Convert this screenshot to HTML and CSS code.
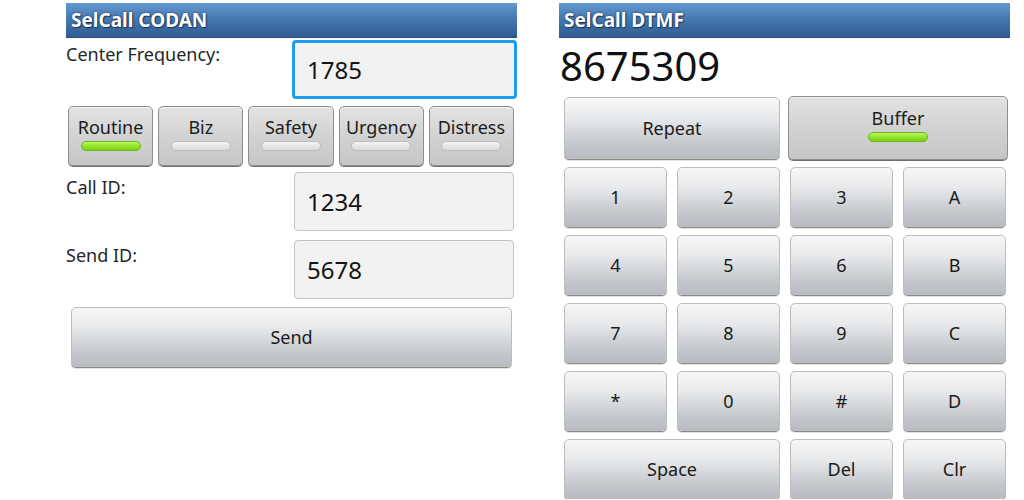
FILE: index.html
```html
<!DOCTYPE html>
<html>
<head>
<meta charset="utf-8">
<link rel="stylesheet" href="styles.css">
</head>
<body>
<div class="screen">
  <section class="panel">
    <div class="title">SelCall CODAN</div>
    <div class="field-row first">
      <div class="label">Center Frequency:</div>
      <div class="input focused">1785</div>
    </div>
    <div class="toggles">
      <div class="toggle"><span>Routine</span><i class="ind on"></i></div>
      <div class="toggle"><span>Biz</span><i class="ind"></i></div>
      <div class="toggle"><span>Safety</span><i class="ind"></i></div>
      <div class="toggle"><span>Urgency</span><i class="ind"></i></div>
      <div class="toggle"><span>Distress</span><i class="ind"></i></div>
    </div>
    <div class="field-row second">
      <div class="label">Call ID:</div>
      <div class="input">1234</div>
    </div>
    <div class="field-row third">
      <div class="label">Send ID:</div>
      <div class="input">5678</div>
    </div>
    <div class="btn send">Send</div>
  </section>
  <section class="panel">
    <div class="title">SelCall DTMF</div>
    <div class="number">8675309</div>
    <div class="keypad">
      <div class="btn span2">Repeat</div>
      <div class="toggle buffer span2"><span>Buffer</span><i class="ind on"></i></div>
      <div class="btn">1</div><div class="btn">2</div><div class="btn">3</div><div class="btn">A</div>
      <div class="btn">4</div><div class="btn">5</div><div class="btn">6</div><div class="btn">B</div>
      <div class="btn">7</div><div class="btn">8</div><div class="btn">9</div><div class="btn">C</div>
      <div class="btn">*</div><div class="btn">0</div><div class="btn">#</div><div class="btn">D</div>
      <div class="btn span2">Space</div><div class="btn">Del</div><div class="btn">Clr</div>
    </div>
  </section>
</div>
</body>
</html>
```

FILE: styles.css
```css
* { box-sizing: border-box; }
body {
  margin: 0;
  background: #ffffff;
  font-family: "Noto Sans", "Open Sans", "DejaVu Sans", sans-serif;
  color: #1c1c1c;
}
.screen {
  display: flex;
  gap: 42px;
  padding: 3px 0 0 66px;
}
.panel {
  width: 451px;
  display: flex;
  flex-direction: column;
}
.title {
  height: 35px;
  line-height: 34px;
  padding-left: 5px;
  color: #ffffff;
  font-weight: bold;
  font-size: 19px;
  background: linear-gradient(#6499cf, #4679b2 45%, #2f5d92);
  border-bottom: 1px solid #284f7d;
  text-shadow: 0 0 2px #17314f, 1px 1px 1px #1d3a5c;
}
.field-row {
  display: flex;
  justify-content: space-between;
  align-items: flex-start;
}
.label {
  font-size: 18px;
  line-height: 24px;
  color: #262626;
}
.first { margin-top: 2px; }
.first .label { padding-top: 2px; }
.second { margin-top: 6px; }
.third { margin-top: 9px; }
.second .label, .third .label { padding-top: 3px; }
.input {
  width: 220px;
  height: 59px;
  margin-right: 3px;
  background: #f2f2f2;
  border: 1px solid #c2c2c2;
  border-radius: 4px;
  padding-left: 12px;
  font-size: 24px;
  line-height: 57px;
  color: #141414;
}
.input.focused {
  width: 225px;
  margin-right: 0;
  border: 3px solid #1e9cf2;
  line-height: 53px;
}
.toggles {
  margin-top: 7px;
  padding: 0 3px 0 2px;
  display: grid;
  grid-template-columns: repeat(5, 1fr);
  gap: 5px;
  height: 60px;
}
.toggle {
  display: flex;
  flex-direction: column;
  align-items: center;
  justify-content: center;
  gap: 3px;
  padding-bottom: 6px;
  background: linear-gradient(#e3e3e3, #d2d2d2 50%, #c6c6c6);
  border: 1px solid #8e8e8e;
  border-radius: 5px;
  box-shadow: inset 0 1px 0 #f2f2f2, 0 1px 0 #6f6f6f;
  font-size: 18px;
  line-height: 22px;
  color: #1c1c1c;
}
.ind {
  display: block;
  width: 60px;
  height: 10px;
  border-radius: 5px;
  background: linear-gradient(#f4f4f4, #dadada);
  border: 1px solid #bdbdbd;
}
.ind.on {
  background: linear-gradient(#bdf75c, #8ee024 60%, #7cd018);
  border-color: #6bb81a;
}
.btn {
  display: flex;
  align-items: center;
  justify-content: center;
  background: linear-gradient(#f6f7f8, #e6e8ea 35%, #c6c9ce 75%, #b8bcc2);
  border: 1px solid #bdbdbd;
  border-radius: 5px;
  box-shadow: 0 1px 0 #8a8a8a, 0 2px 0 #e2e2e2;
  font-size: 18px;
  color: #1a1a1a;
}
.send {
  margin: 8px 5px 0 5px;
  height: 60px;
}
.number {
  height: 58px;
  padding-top: 3px;
  padding-left: 1px;
  font-size: 40px;
  line-height: 50px;
  color: #111;
}
.keypad {
  margin-top: 1px;
  padding: 0 5px;
  display: grid;
  grid-template-columns: repeat(4, 103px);
  grid-template-rows: 62px repeat(5, 60px);
  column-gap: 10px;
  row-gap: 8px;
}
.span2 { grid-column: span 2; }
.buffer {
  margin: -1px -2px -1px -2px;
  padding-bottom: 8px;
}
```
